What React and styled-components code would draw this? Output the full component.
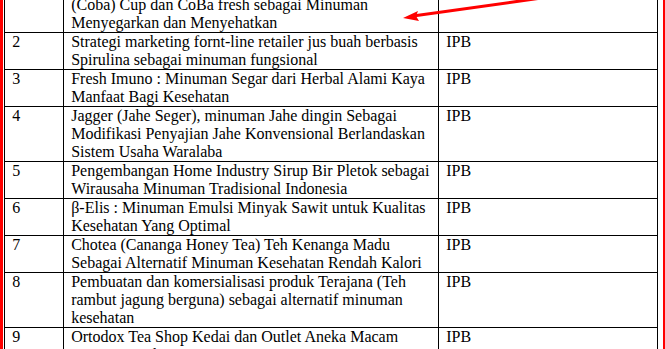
import styled, { createGlobalStyle } from "styled-components";

const GlobalStyle = createGlobalStyle`
  html, body {
    margin: 0;
    padding: 0;
    background: #ffffff;
    overflow: hidden;
  }
  body {
    font-family: "Liberation Serif", "Times New Roman", serif;
    color: #000000;
  }
`;

const Frame = styled.div`
  position: relative;
  width: 657px;
  height: 100vh;
  overflow: hidden;
  border-left: 3px solid #ff0000;
  border-right: 3px solid #ff0000;
  padding: 0 2px 0 1px;
`;

const Table = styled.table`
  width: 653px;
  margin-top: -23px;
  border-collapse: collapse;
  table-layout: fixed;
  font-size: 16px;
  line-height: normal;
`;

const Cell = styled.td`
  border: 1px solid #000000;
  padding: 0 7.2px;
  vertical-align: top;
  text-align: left;
`;

const Arrow = styled.svg`
  position: absolute;
  top: 0;
  left: 0;
  pointer-events: none;
`;

const rows = [
  {
    no: "1",
    title: (
      <>
        Produksi Minuman Cokelat Banana
        <br />
        (Coba) Cup dan CoBa fresh sebagai Minuman Menyegarkan dan Menyehatkan
      </>
    ),
  },
  { no: "2", title: "Strategi marketing fornt-line retailer jus buah berbasis Spirulina sebagai minuman fungsional" },
  { no: "3", title: "Fresh Imuno : Minuman Segar dari Herbal Alami Kaya Manfaat Bagi Kesehatan" },
  {
    no: "4",
    title:
      "Jagger (Jahe Seger), minuman Jahe dingin Sebagai Modifikasi Penyajian Jahe Konvensional Berlandaskan Sistem Usaha Waralaba",
  },
  { no: "5", title: "Pengembangan Home Industry Sirup Bir Pletok sebagai Wirausaha Minuman Tradisional Indonesia" },
  { no: "6", title: "β-Elis : Minuman Emulsi Minyak Sawit untuk Kualitas Kesehatan Yang Optimal" },
  { no: "7", title: "Chotea (Cananga Honey Tea) Teh Kenanga Madu Sebagai Alternatif Minuman Kesehatan Rendah Kalori" },
  {
    no: "8",
    title: "Pembuatan dan komersialisasi produk Terajana (Teh rambut jagung berguna) sebagai alternatif minuman kesehatan",
  },
  { no: "9", title: "Ortodox Tea Shop Kedai dan Outlet Aneka Macam Minuman Teh Nusantara" },
];

const App = () => {
  return (
    <>
      <GlobalStyle />
      <Frame>
        <Table>
          <colgroup>
            <col style={{ width: "59px" }} />
            <col style={{ width: "375px" }} />
            <col style={{ width: "219px" }} />
          </colgroup>
          <tbody>
            {rows.map((r) => (
              <tr key={r.no}>
                <Cell>{r.no}</Cell>
                <Cell>{r.title}</Cell>
                <Cell>IPB</Cell>
              </tr>
            ))}
          </tbody>
        </Table>
        <Arrow width="665" height="40" viewBox="0 0 665 40">
          <line x1="560" y1="-5" x2="410" y2="16" stroke="#ff0000" strokeWidth="3" />
          <polygon points="400,18 415,11 413,16 416,21" fill="#ff0000" />
        </Arrow>
      </Frame>
    </>
  );
};

export default App;
